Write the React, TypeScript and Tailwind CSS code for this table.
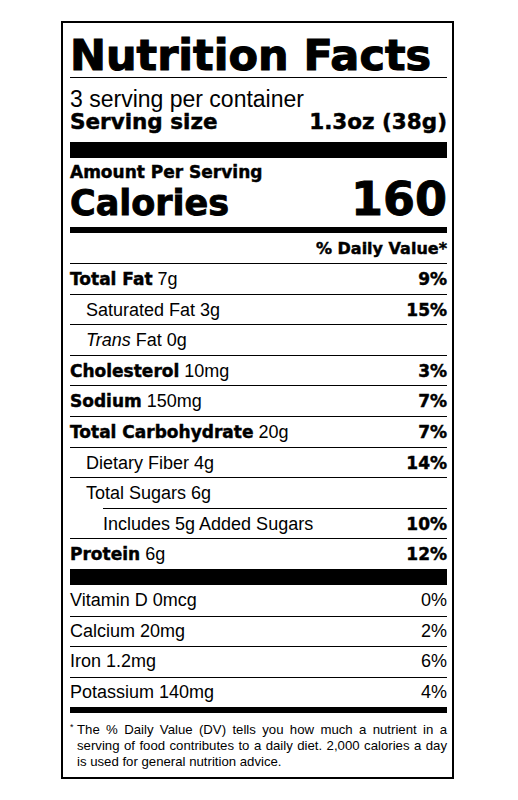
import type { ReactNode } from "react";

type Nutrient = {
  bold?: string;
  label?: ReactNode;
  amt?: string;
  dv?: string;
  indent?: 0 | 1 | 2;
};

const nutrients: Nutrient[] = [
  { bold: "Total Fat", amt: "7g", dv: "9%" },
  { label: "Saturated Fat 3g", indent: 1, dv: "15%" },
  {
    label: (
      <>
        <i>Trans</i> Fat 0g
      </>
    ),
    indent: 1,
  },
  { bold: "Cholesterol", amt: "10mg", dv: "3%" },
  { bold: "Sodium", amt: "150mg", dv: "7%" },
  { bold: "Total Carbohydrate", amt: "20g", dv: "7%" },
  { label: "Dietary Fiber 4g", indent: 1, dv: "14%" },
  { label: "Total Sugars 6g", indent: 1 },
  { label: "Includes 5g Added Sugars", indent: 2, dv: "10%" },
  { bold: "Protein", amt: "6g", dv: "12%" },
];

const vitamins = [
  ["Vitamin D 0mcg", "0%"],
  ["Calcium 20mg", "2%"],
  ["Iron 1.2mg", "6%"],
  ["Potassium 140mg", "4%"],
];

// heavy sans for the label headings
const heavy = "font-['DejaVu_Sans',sans-serif] font-bold [-webkit-text-stroke:0.45px_black]";

function NutrientRow({ n }: { n: Nutrient }) {
  const inner = (
    <div className="flex h-full items-baseline justify-between border-t border-black pt-[5px] leading-[20px]">
      <span>
        {n.bold ? (
          <>
            <span className={`${heavy} text-[17px]`}>{n.bold}</span> {n.amt}
          </>
        ) : (
          n.label
        )}
      </span>
      {n.dv && <span className={`${heavy} text-[17px]`}>{n.dv}</span>}
    </div>
  );

  if (n.indent === 2) {
    return <div className="h-[30.6px] pl-[33px]">{inner}</div>;
  }
  return <div className={n.indent === 1 ? "h-[30.6px] [&>div]:pl-[16px]" : "h-[30.6px]"}>{inner}</div>;
}

export default function App() {
  return (
    <div className="min-h-screen bg-white pl-[61px] pt-[21px] font-['Liberation_Sans',sans-serif] text-[18px] text-black">
      <div className="w-[393px] border-2 border-black pl-[7px] pr-[5px]">
        <h1 className="border-b border-black pt-[10px] font-['DejaVu_Sans',sans-serif] text-[43px] font-bold leading-[44px] [-webkit-text-stroke:1.1px_black]">
          Nutrition Facts
        </h1>

        <p className="pt-[9px] text-[23px] leading-[24px]">3 serving per container</p>
        <div className={`${heavy} flex items-baseline justify-between text-[21.5px] leading-[22px]`}>
          <span>Serving size</span>
          <span>1.3oz (38g)</span>
        </div>

        <div className="mt-[9px] h-[16px] bg-black" />

        <p className={`${heavy} pt-[5px] text-[17px] leading-[18px]`}>Amount Per Serving</p>
        <div className="flex h-[36px] items-baseline justify-between font-['DejaVu_Sans',sans-serif] font-bold [-webkit-text-stroke:0.9px_black]">
          <span className="text-[35px] leading-[30px]">Calories</span>
          <span className="text-[46px] leading-[36px]">160</span>
        </div>

        <div className="mt-[10px] h-[6px] bg-black" />

        <p className={`${heavy} pb-[5px] pt-[7px] text-right text-[16px] leading-[18px]`}>% Daily Value*</p>

        {nutrients.map((n, i) => (
          <NutrientRow key={i} n={n} />
        ))}

        <div className="h-[16px] bg-black" />

        {vitamins.map(([label, dv], i) => (
          <div
            key={label}
            className={
              i === 0
                ? "flex h-[30.6px] items-baseline justify-between pt-[5px] leading-[20px]"
                : "flex h-[30.6px] items-baseline justify-between border-t border-black pt-[4px] leading-[20px]"
            }
          >
            <span>{label}</span>
            <span>{dv}</span>
          </div>
        ))}

        <div className="h-[6px] bg-black" />

        <div className="flex pb-[7px] pt-[9px] text-[13.2px] leading-[16px]">
          <span className="w-[7px] shrink-0 text-[9px] leading-[10px]">*</span>
          <p className="text-justify">
            The % Daily Value (DV) tells you how much a nutrient in a serving of food contributes to a daily diet. 2,000
            calories a day is used for general nutrition advice.
          </p>
        </div>
      </div>
    </div>
  );
}
